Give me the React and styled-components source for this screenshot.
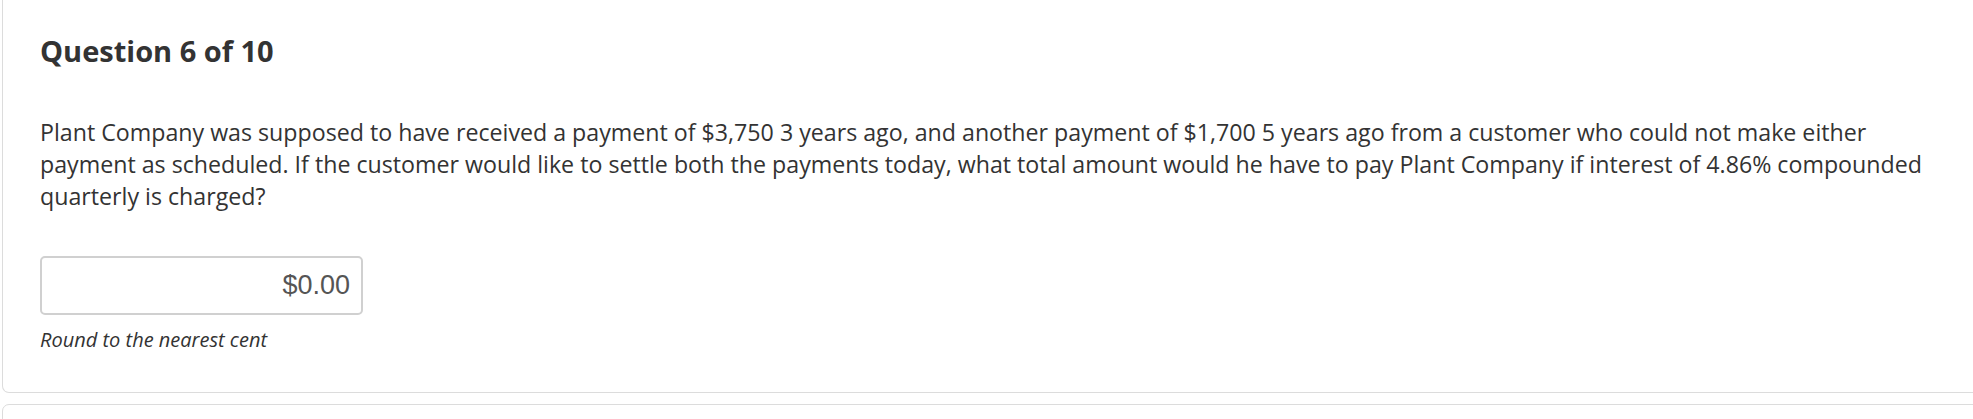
import React from 'react'
import styled, { createGlobalStyle } from 'styled-components'

const GlobalStyle = createGlobalStyle`
  html, body {
    margin: 0;
    padding: 0;
    background: #fff;
    overflow: hidden;
  }
  body {
    font-family: 'Open Sans', 'DejaVu Sans', sans-serif;
    color: #333;
  }
`

const Page = styled.div`
  padding-left: 2px;
  display: flex;
  flex-direction: column;
  gap: 11px;
`

// the top card is cropped by the screenshot, so it has no top edge
const Card = styled.section`
  margin-right: -10px;
  background: #fff;
  border: 1px solid #dcdcdc;
  border-top: ${(p) => (p.$cut ? 'none' : '1px solid #dcdcdc')};
  border-radius: ${(p) => (p.$cut ? '0 0 7px 7px' : '7px 7px 0 0')};
  padding: ${(p) => (p.$cut ? '31px 38px 38px 37px' : '0')};
  min-height: ${(p) => (p.$cut ? 'auto' : '20px')};
`

const Heading = styled.h2`
  margin: 0;
  font-size: 29px;
  line-height: 40px;
  font-weight: 700;
  color: #333;
`

const Question = styled.p`
  margin: 45px 0 0;
  font-size: 23.2px;
  line-height: 32px;
  color: #333;
`

const AnswerInput = styled.input`
  display: block;
  box-sizing: border-box;
  margin-top: 44px;
  width: 323px;
  height: 59px;
  padding: 0 11px;
  border: 2px solid #d0d0d0;
  border-radius: 5px;
  font-family: 'Liberation Sans', Arial, sans-serif;
  font-size: 27px;
  color: #555;
  text-align: right;
  background: #fff;
  outline: none;
`

const Hint = styled.p`
  margin: 11px 0 0;
  font-size: 20px;
  line-height: 28px;
  font-style: italic;
  color: #333;
`

export default function App() {
  return (
    <>
      <GlobalStyle />
      <Page>
        <Card $cut>
          <Heading>Question 6 of 10</Heading>
          <Question>
            Plant Company was supposed to have received a payment of $3,750 3 years ago, and another
            payment of $1,700 5 years ago from a customer who could not make either payment as
            scheduled. If the customer would like to settle both the payments today, what total amount
            would he have to pay Plant Company if interest of 4.86% compounded quarterly is charged?
          </Question>
          <AnswerInput type="text" defaultValue="$0.00" />
          <Hint>Round to the nearest cent</Hint>
        </Card>
        <Card />
      </Page>
    </>
  )
}
